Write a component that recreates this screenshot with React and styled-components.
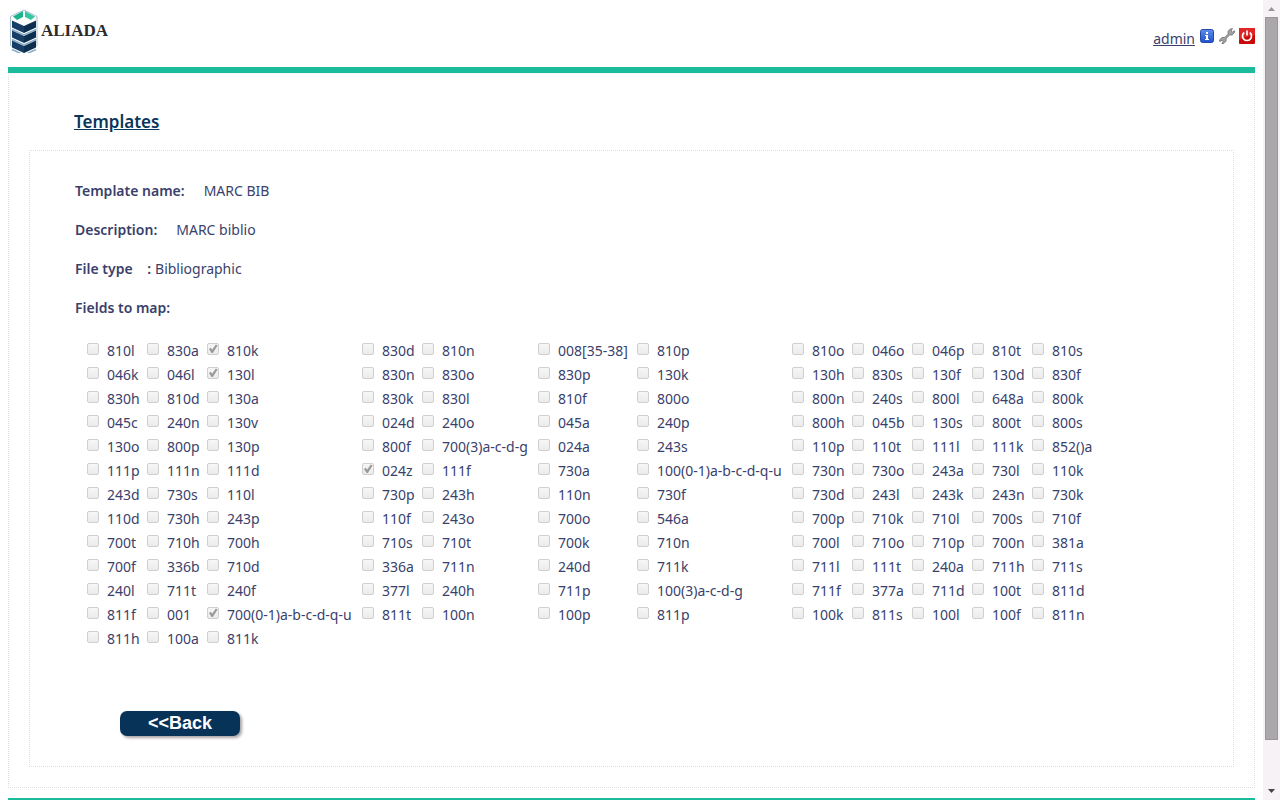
import React from "react";
import styled, { createGlobalStyle } from "styled-components";

const GlobalStyle = createGlobalStyle`
  * { box-sizing: border-box; }
  body {
    margin: 0;
    background: #fff;
    color: #3a3f6c;
    font: 14px/20px "Noto Sans", "Open Sans", sans-serif;
  }
`;

const Window = styled.div`
  display: flex;
  height: 100vh;
  overflow: hidden;
`;

const Page = styled.div`
  flex: 1;
  min-width: 0;
  height: 100%;
  overflow: hidden;
  padding: 0 8px;
`;

const Header = styled.header`
  display: flex;
  justify-content: space-between;
  align-items: flex-start;
  height: 73px;
  padding-top: 9px;
  border-bottom: 6px solid #1abc9c;
`;

const Brand = styled.a`
  display: flex;
  align-items: center;
  gap: 3px;
  color: #2b2b2b;
  font: bold 17px/44px "Liberation Serif", serif;
  text-decoration: none;
`;

const UserNav = styled.nav`
  display: flex;
  align-items: center;
  gap: 4px;
  padding-top: 14px;
`;

const UserLink = styled.a`
  padding-top: 6px;
  color: inherit;
`;

const IconButton = styled.button`
  display: flex;
  width: 16px;
  height: 16px;
  padding: 0;
  border: 0;
  background: none;
`;

const Content = styled.main`
  padding: 36px 20px 20px;
  border: 1px dotted #ddd;
  border-top-color: #eee;
`;

const Title = styled.h1`
  margin: 0 0 16px;
  padding-left: 45px;
  color: #0a3659;
  font-size: 17px;
  font-weight: 600;
  line-height: 24px;
  text-decoration: underline;
`;

const Panel = styled.section`
  padding: 30px 45px 29px;
  border: 1px dotted #ddd;
`;

const Details = styled.dl`
  margin: 0;
`;

const Detail = styled.div`
  display: flex;
  gap: ${(p) => p.$gap}px;
  margin-bottom: 19px;
`;

const Term = styled.dt`
  font-weight: 600;
  white-space: pre;
`;

const Value = styled.dd`
  margin: 0;
`;

const FieldSet = styled.fieldset`
  margin: 0;
  padding: 0;
  border: 0;
`;

const Legend = styled.legend`
  padding: 0;
  font-weight: 600;
`;

const FieldGrid = styled.div`
  display: grid;
  grid-template-columns: 60px 60px 155px 60px 116px 99px 155px repeat(5, 60px);
  grid-auto-rows: 24px;
  padding: 21px 0 0 12px;
`;

const Field = styled.label`
  display: flex;
  gap: 8px;
  line-height: 24px;
  white-space: nowrap;
`;

const Check = styled.input`
  appearance: none;
  flex: none;
  display: grid;
  width: 12px;
  height: 12px;
  margin: 4px 0 0;
  border: 1px solid #cfcfcf;
  border-radius: 2px;
  background: linear-gradient(#f6f6f6, #ebebeb);

  &:checked::before {
    content: "";
    width: 10px;
    height: 10px;
    background: #999;
    clip-path: polygon(10% 50%, 28% 38%, 42% 58%, 78% 4%, 96% 16%, 48% 90%, 36% 90%);
  }
`;

const BackButton = styled.button`
  display: block;
  width: 120px;
  height: 25px;
  margin: 60px 0 0 45px;
  padding: 0;
  border: 0;
  border-radius: 7px;
  background: #083358;
  box-shadow: 2px 2px 3px #a9a3a6;
  color: #fff;
  font: bold 18px/25px "Liberation Sans", sans-serif;
`;

const Actions = styled.div`
  padding-bottom: 1px;
`;

const Footer = styled.footer`
  margin-top: 10px;
  border-top: 6px solid #1abc9c;
`;

const ScrollTrack = styled.div`
  display: flex;
  flex-direction: column;
  align-items: center;
  width: 17px;
  height: 100%;
  background: #f7f2f6;
`;

const ScrollArrow = styled.svg`
  flex: none;
  width: 17px;
  height: 17px;
`;

const ScrollThumb = styled.div`
  flex: 723;
  width: 13px;
  border: 1px solid #99969a;
  background: #aba8ac;
`;

const ScrollRest = styled.div`
  flex: 43;
`;

const rows = [
  "810l 830a 810k* 830d 810n 008[35-38] 810p 810o 046o 046p 810t 810s",
  "046k 046l 130l* 830n 830o 830p 130k 130h 830s 130f 130d 830f",
  "830h 810d 130a 830k 830l 810f 800o 800n 240s 800l 648a 800k",
  "045c 240n 130v 024d 240o 045a 240p 800h 045b 130s 800t 800s",
  "130o 800p 130p 800f 700(3)a-c-d-g 024a 243s 110p 110t 111l 111k 852()a",
  "111p 111n 111d 024z* 111f 730a 100(0-1)a-b-c-d-q-u 730n 730o 243a 730l 110k",
  "243d 730s 110l 730p 243h 110n 730f 730d 243l 243k 243n 730k",
  "110d 730h 243p 110f 243o 700o 546a 700p 710k 710l 700s 710f",
  "700t 710h 700h 710s 710t 700k 710n 700l 710o 710p 700n 381a",
  "700f 336b 710d 336a 711n 240d 711k 711l 111t 240a 711h 711s",
  "240l 711t 240f 377l 240h 711p 100(3)a-c-d-g 711f 377a 711d 100t 811d",
  "811f 001 700(0-1)a-b-c-d-q-u* 811t 100n 100p 811p 100k 811s 100l 100f 811n",
  "811h 100a 811k",
];

const fields = rows.join(" ").split(" ").map((entry) => ({
  name: entry.replace("*", ""),
  checked: entry.endsWith("*"),
}));

function Logo() {
  return (
    <svg width="30" height="44" viewBox="0 0 30 44" aria-hidden="true">
      <path d="M2.500 7.500 16 1l13 6.500v29L16 43 2.500 36.500z" fill="#fff" stroke="#a9bfd0" />
      <path d="M5 7.500 15 2v6L9 11z" fill="#1cb38d" />
      <path d="M27 7.500 17 2v6l6 3z" fill="#35c7a2" />
      {[0, 10, 20].map((y) => (
        <g key={y} transform={`translate(0 ${y})`}>
          <path d="M4 11.500 16 17v7L4 18.500z" fill="#173e66" />
          <path d="M28 11.500 16 17v7l12-5.500z" fill="#0e2e50" />
          <path d="M4 20.500 16 26l12-5.500" fill="none" stroke="#86adc8" strokeWidth="1.500" />
        </g>
      ))}
    </svg>
  );
}

function InfoIcon() {
  return (
    <svg width="16" height="16" viewBox="0 0 16 16" aria-hidden="true">
      <defs>
        <linearGradient id="info" x2="0" y2="1">
          <stop stopColor="#5f8bea" />
          <stop offset="1" stopColor="#2252ca" />
        </linearGradient>
      </defs>
      <rect x="1.500" y="1.500" width="13" height="13" rx="2" fill="url(#info)" stroke="#2449ad" />
      <path d="M7 4h2v2H7zM6 7h3v4h1v1H6v-1h1V8H6z" fill="#fff" />
    </svg>
  );
}

function WrenchIcon() {
  return (
    <svg width="16" height="16" viewBox="0 0 16 16" aria-hidden="true">
      <path
        d="M13.500.600 11 1.200 9 3.400l.2 2.700-3.300 3.300-2.800.1L.600 11.800l.2 1.700 2.200-1.300 1.200 1.200-1.300 2 1.800.1 2.300-2.300.1-2.800 3.400-3.400 2.700-.1 2.300-2.300.1-1.800-2.200 1.400-1.300-1.300z"
        fill="#a2a2a2"
        stroke="#7d7d7d"
        strokeWidth="1"
      />
    </svg>
  );
}

function PowerIcon() {
  return (
    <svg width="16" height="16" viewBox="0 0 16 16" aria-hidden="true">
      <rect width="16" height="16" rx="1" fill="#c90808" />
      <path d="M0 0h16v7Q8 8 0 12z" fill="#e02525" />
      <path d="M5.200 4.500a4.500 4.500 0 1 0 5.600 0M8 2.500v5" fill="none" stroke="#fff" strokeWidth="1.700" />
    </svg>
  );
}

export default function App() {
  return (
    <Window>
      <GlobalStyle />
      <Page>
        <Header>
          <Brand href="#home">
            <Logo />
            ALIADA
          </Brand>
          <UserNav aria-label="User">
            <UserLink href="#admin">admin</UserLink>
            <IconButton aria-label="Information"><InfoIcon /></IconButton>
            <IconButton aria-label="Settings"><WrenchIcon /></IconButton>
            <IconButton aria-label="Log out"><PowerIcon /></IconButton>
          </UserNav>
        </Header>
        <Content>
          <Title>Templates</Title>
          <Panel>
            <Details>
              <Detail $gap={19}>
                <Term>Template name:</Term>
                <Value>MARC BIB</Value>
              </Detail>
              <Detail $gap={19}>
                <Term>Description:</Term>
                <Value>MARC biblio</Value>
              </Detail>
              <Detail $gap={4}>
                <Term>{"File type    :"}</Term>
                <Value>Bibliographic</Value>
              </Detail>
            </Details>
            <FieldSet>
              <Legend>Fields to map:</Legend>
              <FieldGrid>
                {fields.map(({ name, checked }) => (
                  <Field key={name}>
                    <Check type="checkbox" defaultChecked={checked} disabled />
                    {name}
                  </Field>
                ))}
              </FieldGrid>
            </FieldSet>
            <Actions>
              <BackButton type="button">&lt;&lt;Back</BackButton>
            </Actions>
          </Panel>
        </Content>
        <Footer />
      </Page>
      <ScrollTrack aria-hidden="true">
        <ScrollArrow viewBox="0 0 17 17"><path d="M5 11 8.500 7 12 11z" fill="#99969a" /></ScrollArrow>
        <ScrollThumb />
        <ScrollRest />
        <ScrollArrow viewBox="0 0 17 17"><path d="M5 6 8.500 10 12 6z" fill="#444" /></ScrollArrow>
      </ScrollTrack>
    </Window>
  );
}
